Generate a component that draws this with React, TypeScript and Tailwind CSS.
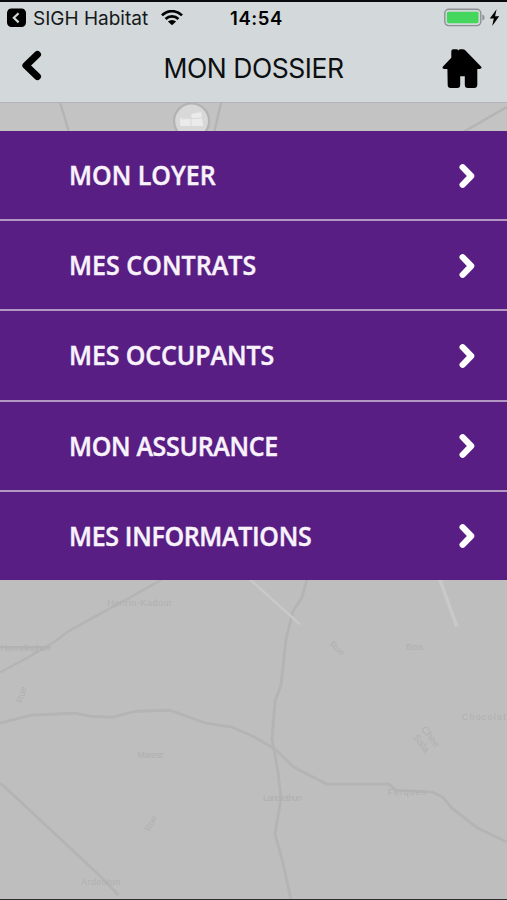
import React from 'react';
import { clsx } from 'clsx';

type MenuItem = {
  label: string;
  spacing: string;
};

const items: MenuItem[] = [
  { label: 'MON LOYER', spacing: 'tracking-[0px]' },
  { label: 'MES CONTRATS', spacing: 'tracking-[0.05px]' },
  { label: 'MES OCCUPANTS', spacing: 'tracking-[-0.1px]' },
  { label: 'MON ASSURANCE', spacing: 'tracking-[-0.35px]' },
  { label: 'MES INFORMATIONS', spacing: 'tracking-[-0.35px]' },
];

function StatusBar() {
  return (
    <div className="flex h-[32px] items-center pl-[7px] pr-[7px]">
      <svg className="h-5 w-5 shrink-0" viewBox="0 0 20 20">
        <rect x="0" y="0.5" width="19" height="18.5" rx="4.5" fill="#000" />
        <path d="M11.6 5.2 6.8 9.8l4.8 4.6" fill="none" stroke="#d3d8db" strokeWidth="2.2" />
      </svg>
      <span className="ml-[6px] w-[116px] whitespace-nowrap text-[19px] leading-none tracking-[0px] text-[#15181a]">
        SIGH Habitat
      </span>
      <svg className="ml-[11px] h-[17px] w-[24px] shrink-0" viewBox="0 0 24 17">
        <g fill="none" stroke="#000" strokeWidth="2.7">
          <path d="M2 5.4a14 14 0 0 1 20 0" />
          <path d="M5.6 9a9 9 0 0 1 12.8 0" />
        </g>
        <path d="M12 15.2 7.9 11.5a6 6 0 0 1 8.2 0Z" fill="#000" />
      </svg>
      <span className="ml-[46px] text-[18.5px] font-semibold leading-none tracking-[0.6px] text-black">
        14:54
      </span>
      <svg className="ml-auto h-5 w-[56px] shrink-0" viewBox="0 0 56 20">
        <rect x="0.8" y="1.3" width="36" height="16.3" rx="4" fill="none" stroke="#8d9194" strokeWidth="1.4" />
        <rect x="2.9" y="3.7" width="31.6" height="11.5" rx="1.6" fill="#45d75d" />
        <path d="M38.4 6.5q2.2.7 2.2 3t-2.2 3Z" fill="#8d9194" />
        <path d="M52.6 1.3 45.8 10.6h4L48.2 17.9l7-9.6h-4.1Z" fill="#000" />
      </svg>
    </div>
  );
}

function TitleBar() {
  return (
    <div className="grid flex-1 grid-cols-[65px_1fr_65px] items-center pb-[1px]">
      <button className="mb-[5px] ml-[21px] flex h-[33px] w-[22px] items-center">
        <svg className="h-[31px] w-[22px]" viewBox="0 0 22 31">
          <path d="M16.4 4.5 5 15.5l11.4 11" fill="none" stroke="#000" strokeWidth="7.2" strokeLinecap="round" strokeLinejoin="round" />
        </svg>
      </button>
      <h1 className="whitespace-nowrap pt-[2px] text-center text-[26.5px] leading-none tracking-[-0.45px] text-[#0c0e0f]">MON DOSSIER</h1>
      <button className="h-[40px] w-[40px]">
        <svg className="h-10 w-10" viewBox="0 0 40 40">
          <path
            d="M9.3 3.3q0-2 2-2h3.1q1.5 0 1.8 1.2.7-1.3 2.4-1.3h2.2q1.4 0 2.4 1L39 18.6q1.5 1.9-1.5 2.5h-2.2l0 15.8q-.2 3-3 3h-6.5q-3 0-3-3v-8.7h-4.6v8.7q0 3-3 3h-6.5q-3 0-3-3L5.4 21.1H2.3q-2.8-.5-1.3-2.5l8.3-8.8Z"
            fill="#000"
          />
        </svg>
      </button>
    </div>
  );
}

function MapBackground() {
  return (
    <svg className="absolute inset-0 h-full w-full" viewBox="0 103 507 797">
      <rect x="0" y="103" width="507" height="797" fill="#bebebe" />
      <rect x="0" y="103" width="507" height="29" fill="#c3c3c3" />
      <g fill="none" stroke="#b4b4b4" strokeWidth="2.4" strokeLinejoin="round">
        <path d="M60 103 69 133M221 103 214 133M507 107 462 133" />
        <path d="M0 673 28 658 52 644 68 632 108 610 130 598 162 580" />
        <path d="M0 648H50" />
        <path d="M0 724 30 716 74 714 90 717 112 718 135 712 170 711 206 724 232 728 253 737 274 749 294 768 327 785H389L396 791 433 793 443 798 452 809 478 829 507 843" strokeWidth="2.8" />
        <path d="M307 580 302 598 293 612 286 640 281 686 275 702 272 740 278 772 281 800 275 835 282 860 291 900" strokeWidth="2.8" />
        <path d="M0 784 10 793 102 879 118 896" strokeWidth="2.8" />
      </g>
      <g fill="none" stroke="#c9c9c9" strokeWidth="3.4">
        <path d="M250 580 300 625" strokeWidth="2.4" />
        <path d="M440 580 457 627" />
      </g>
      <circle cx="191.5" cy="121" r="17.5" fill="#d8d8d8" stroke="#b3b3b3" strokeWidth="2.2" />
      <path d="M180 118h10l1-4 10-2 2 14h-23Z" fill="#ebebeb" />
      <path d="M191 113v13M181 119l21-1" stroke="#d8d8d8" strokeWidth="1" />
      <g fill="#b0b0b0" fontSize="9" fontFamily="Liberation Sans, sans-serif">
        <text x="107" y="607" textLength="65">Henrin-Kadour</text>
        <text x="0" y="652" textLength="50">Hermelinghen</text>
        <text x="137" y="759" textLength="27">Maresc</text>
        <text x="263" y="802" textLength="39">Landrethun</text>
        <text x="388" y="796" textLength="38">Ferques</text>
        <text x="462" y="721" textLength="44">Chocolat</text>
        <text x="81" y="886" textLength="39">Ardentun</text>
        <text x="406" y="651">Bois</text>
        <text x="329" y="646" transform="rotate(40 329 646)">Rue</text>
        <text x="421" y="730" fontSize="10" transform="rotate(53 421 730)">Chee</text>
        <text x="413" y="738" fontSize="10" transform="rotate(53 413 738)">Sala</text>
        <text x="22" y="704" transform="rotate(-75 22 704)">Rue</text>
        <text x="150" y="833" transform="rotate(-65 150 833)">Rue</text>
      </g>
    </svg>
  );
}

function MenuRow({ item, last }: { item: MenuItem; last: boolean }) {
  return (
    <li className={clsx('flex items-center justify-between bg-[#581e83] pl-[68.6px] pr-[31px]', last ? 'h-[88px]' : 'h-[88.2px]')}>
      <span
        className={clsx(
          "mb-[1px] origin-left scale-x-[0.925] whitespace-nowrap font-['Open_Sans',sans-serif] text-[27px] font-semibold leading-none text-[#f8f3fb] [-webkit-text-stroke:0.45px_#f8f3fb]",
          item.spacing
        )}
      >
        {item.label}
      </span>
      <svg className="mt-[1px] h-[26px] w-[18px] shrink-0" viewBox="0 0 18 26">
        <path d="M4.6 4.2 13.2 13 4.6 21.8" fill="none" stroke="#fff" strokeWidth="6.2" strokeLinecap="round" strokeLinejoin="round" />
      </svg>
    </li>
  );
}

export default function App() {
  return (
    <div className="flex h-[900px] w-[507px] flex-col overflow-hidden border-b border-t-2 border-b-[#302c30] border-t-[#080a0b] bg-[#bebebe] font-['Inter',sans-serif]">
      <header className="flex h-[101px] shrink-0 flex-col border-b border-[#b0b4b6] bg-[#d3d8db]">
        <StatusBar />
        <TitleBar />
      </header>
      <main className="relative flex-1">
        <MapBackground />
        <ul className="relative mt-[28px] flex flex-col gap-[2px] bg-[#b397c3]">
          {items.map((item, i) => (
            <MenuRow key={item.label} item={item} last={i === items.length - 1} />
          ))}
        </ul>
      </main>
    </div>
  );
}
